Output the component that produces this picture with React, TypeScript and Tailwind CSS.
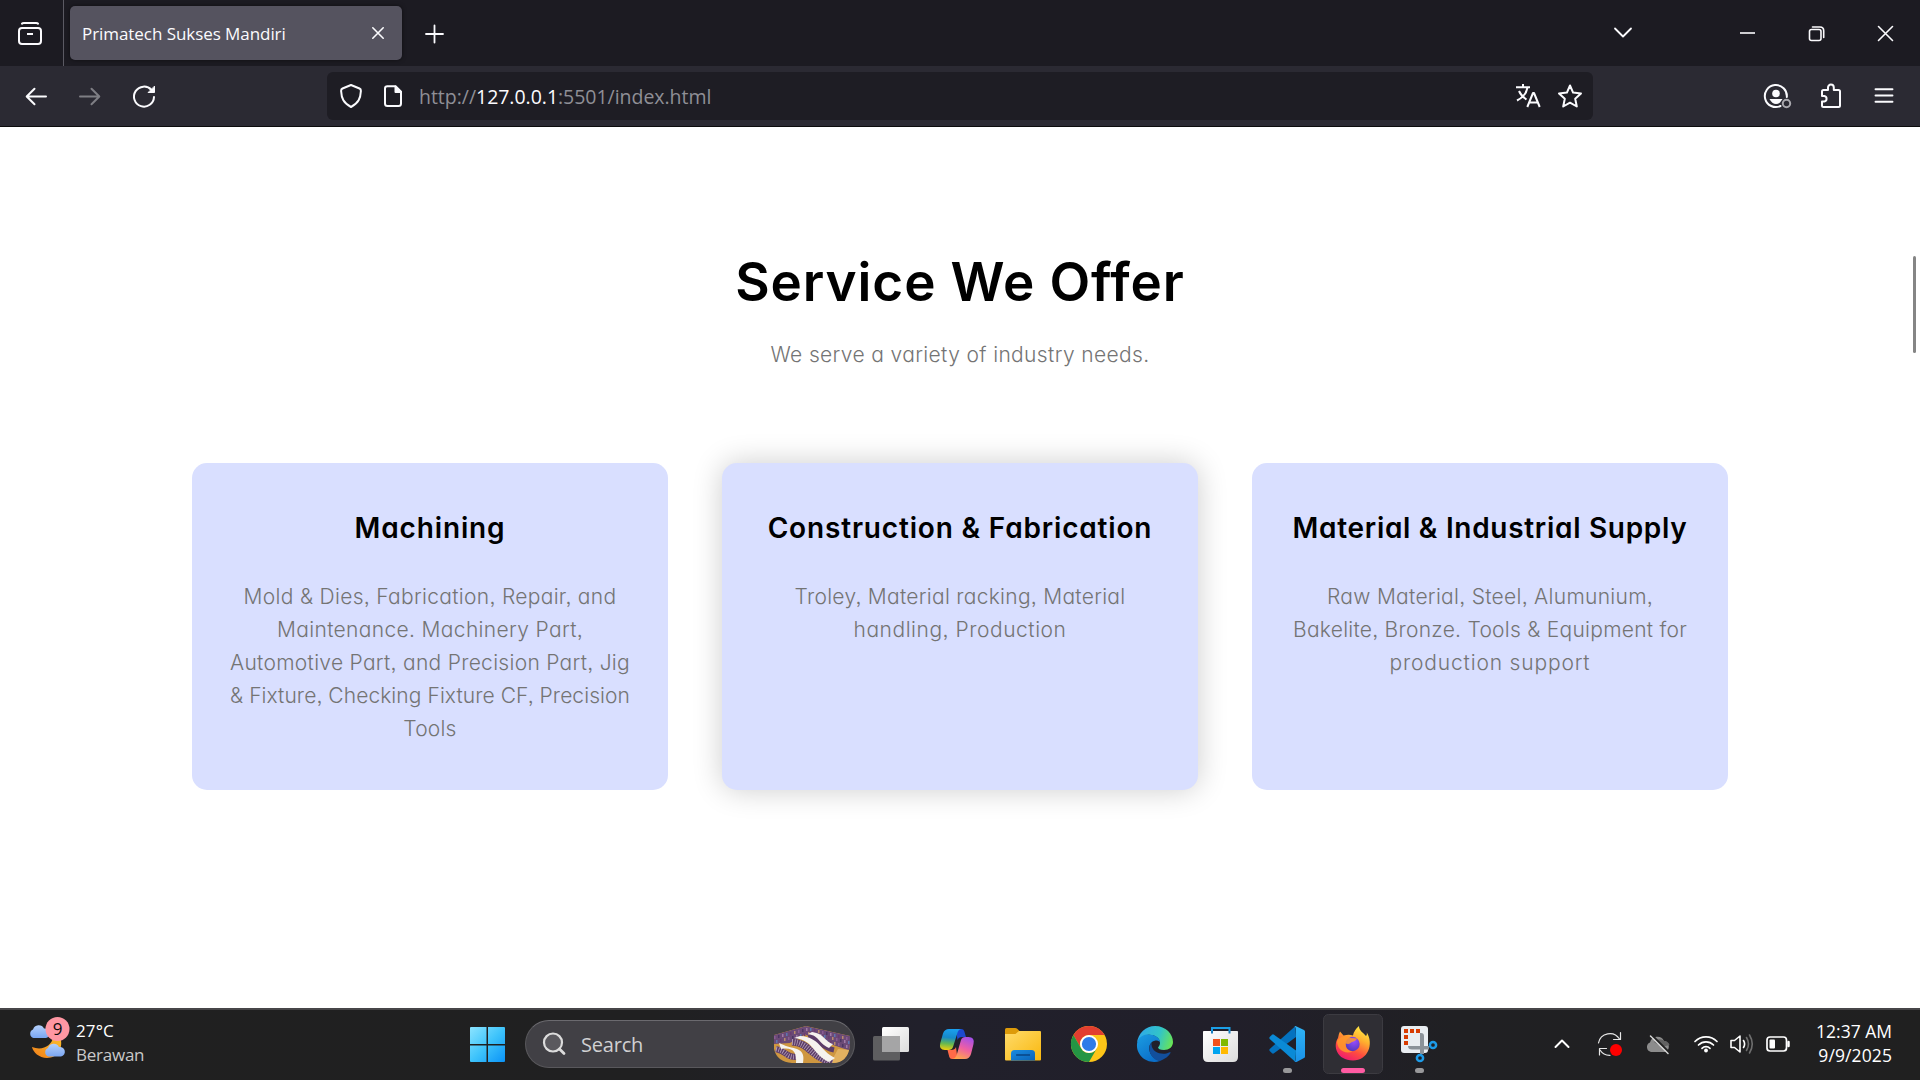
import React from "react";

type BoxProps = {
  x: number;
  y: number;
  w: number;
  h: number;
  label: string;
  children: React.ReactNode;
  className?: string;
};

/* Icon button: the drawing uses screen coordinates through the viewBox. */
function Icon({ x, y, w, h, label, children, className = "" }: BoxProps) {
  return (
    <button aria-label={label} className={"flex shrink-0 items-center justify-center " + className}>
      <svg
        width={w}
        height={h}
        viewBox={`${x} ${y} ${w} ${h}`}
        fill="none"
        stroke="#fbfbfe"
        strokeWidth="2"
        strokeLinecap="round"
        strokeLinejoin="round"
      >
        {children}
      </svg>
    </button>
  );
}

function TabStrip() {
  return (
    <div className="flex h-[66px] items-center bg-[#1c1b22]">
      <Icon x={0} y={0} w={63} h={66} label="Firefox View">
        <path d="M22 23.6Q22.4 23 24 23H36Q37.6 23 38 23.6" />
        <rect x="19" y="28" width="22" height="16" rx="3" />
        <path d="M27 34H33" strokeLinecap="butt" />
      </Icon>
      <div className="h-full w-px bg-[#5b5a63]" />
      <div className="ml-[6px] flex h-[54px] w-[332px] items-center justify-between rounded-[5px] bg-[#55535f] pl-3 shadow-[0_0_4px_rgba(0,0,0,0.5)]">
        <span className="pt-px font-['Open_Sans',sans-serif] text-[17px] tracking-[-0.06px] text-[#fbfbfe]">
          Primatech Sukses Mandiri
        </span>
        <Icon x={358} y={13} w={44} h={40} label="Close tab">
          <path d="M372.800 27.800L383.200 38.200M383.200 27.800L372.800 38.200" strokeWidth="1.600" />
        </Icon>
      </div>
      <Icon x={410} y={8} w={50} h={50} label="New tab" className="ml-[8px]">
        <path d="M426 34H443M434.500 25.500V42.500" strokeWidth="1.800" />
      </Icon>
      <Icon x={1600} y={8} w={48} h={50} label="List all tabs" className="ml-auto">
        <path d="M1615 28.500L1623 36.500L1631 28.500" strokeWidth="1.800" />
      </Icon>
      <Icon x={1713} y={0} w={69} h={66} label="Minimize" className="ml-[65px]">
        <path d="M1740 33H1755" strokeWidth="1.600" strokeLinecap="butt" />
      </Icon>
      <Icon x={1782} y={0} w={69} h={66} label="Restore">
        <rect x="1809.500" y="29.500" width="11.500" height="11" rx="2" strokeWidth="1.600" />
        <path d="M1812.500 27H1820Q1823.700 27 1823.700 30.700V37.500" strokeWidth="1.600" />
      </Icon>
      <Icon x={1851} y={0} w={69} h={66} label="Close">
        <path d="M1878.500 26.500L1892.500 40.500M1892.500 26.500L1878.500 40.500" strokeWidth="1.600" />
      </Icon>
    </div>
  );
}

function NavBar() {
  return (
    <div className="flex h-[61px] items-center border-b border-[#0c0c0d] bg-[#2b2a33] pr-3 pl-3">
      <Icon x={12} y={72} w={48} h={48} label="Back">
        <path d="M27 96.500H46M34.500 88.700L26.700 96.500L34.500 104.300" />
      </Icon>
      <Icon x={66} y={72} w={48} h={48} label="Forward" className="ml-[6px] opacity-40">
        <path d="M80 96.500H99M91.500 88.700L99.300 96.500L91.500 104.300" />
      </Icon>
      <Icon x={120} y={72} w={48} h={48} label="Reload" className="ml-[6px]">
        <path d="M151.500 90A10 10 0 1 0 154 97" />
        <path d="M154.500 86.500V92.500H148.500Z" fill="#fbfbfe" strokeWidth="1" />
      </Icon>
      <div className="ml-[159px] flex h-12 w-[1266px] items-center rounded-[6px] bg-[#1e1d24] pr-[3px] pl-[7px]">
        <Icon x={334} y={78} w={34} h={36} label="Tracking protection">
          <path d="M351 85L359.500 88.500Q361 89.200 360.900 91C360.500 98.500 358.500 103 351 107C343.500 103 341.500 98.500 341.100 91Q341 89.200 342.500 88.500Z" />
        </Icon>
        <Icon x={376} y={78} w={34} h={36} label="Site information" className="ml-2">
          <path d="M387 86.200H395.500L401 91.700V103.500Q401 106 398.500 106H387.500Q385 106 385 103.500V88.500Q385 86.200 387.500 86.200Z" />
          <path d="M395.500 86.500V92H401Z" fill="#fbfbfe" />
        </Icon>
        <span className="ml-[9px] pt-[2px] font-['Open_Sans',sans-serif] text-[19.5px] tracking-[-0.03px] text-[#8f8f96]">
          http://<span className="text-[#fbfbfe]">127.0.0.1</span>:5501/index.html
        </span>
        <Icon x={1508} y={78} w={40} h={36} label="Translate page" className="ml-auto">
          <path d="M1516 87.300H1530M1523 84V87M1527.500 87.500C1526.500 93 1522 98 1517 100.500M1519 91C1520.500 94.500 1523.500 97.500 1526.500 99.500" strokeLinecap="butt" />
          <path d="M1527.300 107L1533 93H1534L1539.700 107M1529.500 102.500H1537.500" strokeLinecap="butt" />
        </Icon>
        <Icon x={1550} y={78} w={40} h={36} label="Bookmark this page" className="ml-[2px]">
          <path d="M1570 85.500L1573.100 92.600L1581 93.500L1575.200 98.700L1576.800 106.500L1570 102.700L1563.200 106.500L1564.800 98.700L1559 93.500L1566.900 92.600Z" />
        </Icon>
      </div>
      <Icon x={1754} y={76} w={46} h={40} label="Account" className="ml-auto">
        <path d="M1780.500 106A11 11 0 1 1 1786.800 97" />
        <circle cx="1776" cy="93.500" r="3.800" fill="#fbfbfe" stroke="none" />
        <path d="M1769.500 99H1782.500L1780 102.500Q1778 104 1776 104Q1772 104 1769.500 99Z" fill="#fbfbfe" stroke="none" />
        <circle cx="1786.500" cy="103.500" r="3.700" stroke="#a9a8ae" />
      </Icon>
      <Icon x={1808} y={76} w={48} h={40} label="Extensions" className="ml-2">
        <path d="M1822 96V91.500Q1822 90 1823.500 90H1828V87.500A2.900 2.900 0 0 1 1833.800 87.500V90H1838.500Q1840 90 1840 91.500V105.500Q1840 107 1838.500 107H1823.500Q1822 107 1822 105.500V101.500H1824.300A2.800 2.800 0 0 0 1824.300 96Z" />
      </Icon>
      <Icon x={1860} y={76} w={48} h={40} label="Menu" className="ml-1">
        <path d="M1875.500 89.200H1892.500M1875.500 95.500H1892.500M1875.500 101.800H1892.500" strokeWidth="1.900" />
      </Icon>
    </div>
  );
}

const FEATURES = "[font-feature-settings:'cv11','ss03','liga'_0]";

type Service = { title: string; titleClass: string; lines: [string, string][]; cardClass: string };

const services: Service[] = [
  {
    title: "Machining",
    titleClass: "tracking-[0.85px]",
    cardClass: "",
    lines: [
      ["Mold & Dies, Fabrication, Repair, and", "tracking-[0.31px]"],
      ["Maintenance. Machinery Part,", "tracking-[0.34px]"],
      ["Automotive Part, and Precision Part, Jig", "tracking-[0.29px]"],
      ["& Fixture, Checking Fixture CF, Precision", "tracking-[0.07px]"],
      ["Tools", "tracking-[0.2px]"],
    ],
  },
  {
    title: "Construction & Fabrication",
    titleClass: "tracking-[0.83px]",
    cardClass: "shadow-[0_0_30px_rgba(0,0,0,0.2)]",
    lines: [
      ["Troley, Material racking, Material", "tracking-[0.28px]"],
      ["handling, Production", "tracking-[0.54px]"],
    ],
  },
  {
    title: "Material & Industrial Supply",
    titleClass: "tracking-[0.7px]",
    cardClass: "",
    lines: [
      ["Raw Material, Steel, Alumunium,", "tracking-[0.29px]"],
      ["Bakelite, Bronze. Tools & Equipment for", "tracking-[0.26px]"],
      ["production support", "tracking-[0.83px]"],
    ],
  },
];

function Page() {
  return (
    <main
      className={
        "relative flex h-[881px] flex-col items-center bg-white pt-[119px] text-center font-['Inter',sans-serif] " + FEATURES
      }
    >
      <h1 className="text-[53px] leading-[72px] font-semibold tracking-[0.9px] text-black">Service We Offer</h1>
      <p className="mt-[20px] text-[21px] leading-[33px] font-light tracking-[0.36px] text-[#747474]">
        We serve a variety of industry needs.
      </p>
      <div className="mt-[92px] grid w-[1536px] grid-cols-3 gap-[54px]">
        {services.map((s) => (
          <article key={s.title} className={"h-[327px] rounded-[15px] bg-[#d9dfff] pt-[45px] " + s.cardClass}>
            <h2 className={"text-[28px] leading-[40px] font-semibold text-black " + s.titleClass}>{s.title}</h2>
            <p className="mt-[32px] text-[21px] leading-[33px] font-light text-[#747474]">
              {s.lines.map(([text, tracking]) => (
                <span key={text} className={"block whitespace-nowrap " + tracking}>
                  {text}
                </span>
              ))}
            </p>
          </article>
        ))}
      </div>
      <div className="absolute top-[129px] right-[4px] h-[97px] w-[3px] rounded-full bg-[#858585]" />
    </main>
  );
}

function AppIcon({ x, label, children }: { x: number; label: string; children: React.ReactNode }) {
  return (
    <button aria-label={label} className="h-[60px] w-[60px] shrink-0">
      <svg width="60" height="60" viewBox={`${x} 1014 60 60`}>
        {children}
      </svg>
    </button>
  );
}

function Gradients() {
  return (
    <svg width="0" height="0" className="absolute">
      <defs>
        <linearGradient id="win" gradientUnits="userSpaceOnUse" x1="470" y1="1027" x2="505" y2="1062">
          <stop offset="0" stopColor="#8ce4ff" />
          <stop offset="0.5" stopColor="#3fc4fb" />
          <stop offset="1" stopColor="#0a93f7" />
        </linearGradient>
        <linearGradient id="cloud" x1="0" y1="0" x2="0" y2="1">
          <stop offset="0" stopColor="#b4d0fb" />
          <stop offset="1" stopColor="#7aa6f2" />
        </linearGradient>
        <linearGradient id="moon" x1="0" y1="1" x2="1" y2="0">
          <stop offset="0" stopColor="#ef7d1a" />
          <stop offset="1" stopColor="#fbc02d" />
        </linearGradient>
        <linearGradient id="white" x1="0" y1="0" x2="1" y2="1">
          <stop offset="0" stopColor="#ffffff" />
          <stop offset="1" stopColor="#dcdcdc" />
        </linearGradient>
        <linearGradient id="copA" x1="0.4" y1="0" x2="0.3" y2="1">
          <stop offset="0" stopColor="#1a9fee" />
          <stop offset="0.4" stopColor="#1689c9" />
          <stop offset="0.7" stopColor="#66b850" />
          <stop offset="1" stopColor="#f2cf0d" />
        </linearGradient>
        <linearGradient id="copB" x1="0.7" y1="0" x2="0.3" y2="1">
          <stop offset="0" stopColor="#a550e8" />
          <stop offset="0.5" stopColor="#ee5fa4" />
          <stop offset="1" stopColor="#ffa64c" />
        </linearGradient>
        <linearGradient id="folder" x1="0" y1="0" x2="1" y2="1">
          <stop offset="0" stopColor="#ffdb6b" />
          <stop offset="1" stopColor="#f9b80e" />
        </linearGradient>
        <linearGradient id="folderBlue" x1="0" y1="0" x2="1" y2="1">
          <stop offset="0" stopColor="#1a8be0" />
          <stop offset="1" stopColor="#0a63b8" />
        </linearGradient>
        <linearGradient id="edgeTop" gradientUnits="userSpaceOnUse" x1="1138" y1="1034" x2="1173" y2="1046">
          <stop offset="0" stopColor="#2fa9e8" />
          <stop offset="0.55" stopColor="#32c4c8" />
          <stop offset="1" stopColor="#6fe84a" />
        </linearGradient>
        <linearGradient id="edgeLeft" x1="0" y1="0" x2="0.6" y2="1">
          <stop offset="0" stopColor="#1b9de2" />
          <stop offset="1" stopColor="#0b6fc9" />
        </linearGradient>
        <linearGradient id="vsc" x1="0" y1="0" x2="0" y2="1">
          <stop offset="0" stopColor="#2fb4f6" />
          <stop offset="1" stopColor="#1a92e8" />
        </linearGradient>
        <linearGradient id="fox" x1="0.8" y1="0" x2="0.3" y2="1">
          <stop offset="0" stopColor="#fff24a" />
          <stop offset="0.35" stopColor="#ffb02e" />
          <stop offset="0.7" stopColor="#ff4c3f" />
          <stop offset="1" stopColor="#ee1a72" />
        </linearGradient>
        <radialGradient id="foxGlobe" cx="0.6" cy="0.3" r="0.8">
          <stop offset="0" stopColor="#9a4dff" />
          <stop offset="1" stopColor="#4a36b5" />
        </radialGradient>
        <clipPath id="pic">
          <path d="M774 1036L806 1027L850 1037V1046Q848 1064 832 1064H792Q777 1063 774 1050Z" />
        </clipPath>
      </defs>
    </svg>
  );
}

const cloudPath = (x: number, y: number) =>
  `M${x + 4.5} ${y + 13}A4.500 4.500 0 0 1 ${x + 4} ${y + 4.5}A6 6 0 0 1 ${x + 15} ${y + 3.5}A4.800 4.800 0 0 1 ${x + 17} ${y + 13}Z`;

const bookRows = [0, 1, 2, 3, 4, 5, 6, 7, 8, 9, 10, 11, 12, 13, 14, 15, 16, 17, 18];
const bookColors = ["#8a5c93", "#4a3562", "#a07aa6", "#5c77b0", "#6a3c70", "#b98b6a"];

function Taskbar() {
  return (
    <footer className="relative flex h-[72px] items-center border-t-2 border-[#474649] bg-[linear-gradient(90deg,#202020_0%,#202021_34%,#21202b_48%,#211f2a_64%,#202023_76%,#202020_100%)] pb-[2px] font-['Open_Sans',sans-serif]">
      <Gradients />
      <div className="flex w-[457px] items-center pl-[24px]">
        <svg width="52" height="60" viewBox="24 1014 52 60">
          <path d="M60 1037C64 1047 58 1058 47 1058C39 1058 33 1052 32 1047C42 1051 52 1046 53 1037Z" fill="url(#moon)" />
          <path d={cloudPath(29, 1025)} fill="url(#cloud)" />
          <path d={cloudPath(44, 1043.5)} fill="url(#cloud)" />
          <circle cx="57.500" cy="1029" r="12" fill="#ff97a3" />
          <text x="57.500" y="1035" textAnchor="middle" fontSize="17" fill="#0b0b0b">
            9
          </text>
        </svg>
        <div className="flex flex-col pb-[2px] text-[17px] leading-[24px]">
          <span className="tracking-[0.1px] text-white">27°C</span>
          <span className="tracking-[-0.24px] text-[#c9c9c9]">Berawan</span>
        </div>
      </div>

      <AppIcon x={457} label="Start">
        <path
          d="M471 1027H486.500V1044H470V1028Q470 1027 471 1027ZM488 1027H504Q505 1027 505 1028V1044H488ZM470 1045.500H486.500V1062H471Q470 1062 470 1061ZM488 1045.500H505V1061Q505 1062 504 1062H488Z"
          fill="url(#win)"
        />
      </AppIcon>

      <div className="ml-[8px] flex h-12 w-[330px] items-center rounded-full border border-[#59585c] border-t-[#6b6a6f] bg-[#414045] pl-[15px]">
        <svg width="28" height="30" viewBox="541 1029 28 30" fill="none">
          <circle cx="553" cy="1042.500" r="9" stroke="#dcdcdc" strokeWidth="2.200" fill="#5a595e" />
          <path d="M559.500 1049L564 1053.500" stroke="#dcdcdc" strokeWidth="2.800" strokeLinecap="round" />
        </svg>
        <span className="ml-[12px] pt-[2px] text-[20px] tracking-[-0.2px] text-[#d0d0d2]">Search</span>
        <svg width="78" height="40" viewBox="773 1025 78 40" className="mr-[3px] ml-auto">
          <g clipPath="url(#pic)">
            <rect x="773" y="1025" width="78" height="40" fill="#cf9740" />
            <path d="M773 1036L806 1027V1035L790 1044L773 1045Z" fill="#6b4a76" />
            <path d="M806 1027L851 1037V1052L836 1047L806 1036Z" fill="#6b4a76" />
            {bookRows.map((i) => (
              <g key={i}>
                <rect x={774 + i * 4} y={i < 9 ? 1037 - i : 1029 + (i - 9)} width="1.500" height="3" fill={bookColors[i % 6]} />
                <rect x={776 + i * 4} y={i < 9 ? 1041 - i : 1033 + (i - 9)} width="1.500" height="3" fill={bookColors[(i + 3) % 6]} />
                {i > 11 && <rect x={774 + i * 4} y={1037 + (i - 9)} width="1.500" height="3" fill={bookColors[(i + 2) % 6]} />}
              </g>
            ))}
            <path d="M838 1050L851 1051V1065H830Z" fill="#e2b160" />
            <path d="M776 1050C789 1053 784 1058 796 1058" stroke="#5c3d68" strokeWidth="6" fill="none" />
            <path d="M776 1050C789 1053 784 1058 796 1058" stroke="#b9a3bd" strokeWidth="5" strokeDasharray="0.8 1.600" fill="none" />
            <path d="M792 1043C810 1044 808 1056 832 1064" stroke="#5c3d68" strokeWidth="7" fill="none" />
            <path d="M792 1043C810 1044 808 1056 832 1064" stroke="#b9a3bd" strokeWidth="6" strokeDasharray="0.8 1.600" fill="none" />
            <path d="M808 1038C820 1040 820 1048 834 1051" stroke="#5c3d68" strokeWidth="5" fill="none" />
            <path d="M779 1044L781 1050C793 1048 797 1053 796 1064H803C806 1049 795 1050 786 1047Z" fill="#f5f3ee" />
            <path d="M794 1039L800 1037C820 1038 820 1052 835 1059L829 1063C812 1055 814 1041 794 1039Z" fill="#f5f3ee" />
            <path d="M808 1035L812 1033C825 1035 824 1042 833 1045L829 1049C818 1044 820 1037 808 1035Z" fill="#f5f3ee" />
          </g>
        </svg>
      </div>

      <div className="ml-[6px] flex gap-[6px]">
        <AppIcon x={861} label="Task view">
          <rect x="882" y="1027" width="27" height="25" rx="1.500" fill="url(#white)" />
          <rect x="873" y="1036" width="27" height="24.500" rx="1.500" fill="#5e5e60" />
          <path d="M882 1036H900V1052H882Z" fill="#a5a5a6" />
        </AppIcon>
        <AppIcon x={927} label="Copilot">
          <path d="M956 1029H961.500Q963.500 1029 964.200 1031L966 1037H962Q958.500 1037 957.500 1040Z" fill="#1c49cf" />
          <path d="M957.500 1059H952Q950 1059 949.300 1057L947.500 1050H951Q955 1050 956 1047Z" fill="#ff6a48" />
          <path d="M949 1029H961Q958.500 1029.500 957.700 1032L953 1047Q952 1050 948.500 1050H945Q938.500 1050 940.300 1043L943 1033.500Q944.500 1029 949 1029Z" fill="url(#copA)" />
          <path d="M965 1059H952.500Q955.500 1058.500 956.500 1055.500L961 1040Q962 1037 965.500 1037H968.500Q975 1037 973.500 1044L971 1054Q969.500 1059 965 1059Z" fill="url(#copB)" />
        </AppIcon>
        <AppIcon x={993} label="File Explorer">
          <path d="M1005 1029.500Q1005 1028 1006.500 1028H1015Q1016.500 1028 1017.500 1029L1020 1031.500V1036H1005Z" fill="#dd9b0a" />
          <path d="M1005 1034H1015.500L1019 1031H1040Q1041 1031 1041 1032V1059.500Q1041 1060.500 1040 1060.500H1006Q1005 1060.500 1005 1059.500Z" fill="url(#folder)" />
          <path d="M1011 1060.500V1053.500Q1011 1050 1014.500 1050H1031.500Q1035 1050 1035 1053.500V1060.500Z" fill="url(#folderBlue)" />
          <path d="M1016 1055H1030" stroke="#0a4a8c" strokeWidth="1.700" />
        </AppIcon>
        <AppIcon x={1059} label="Google Chrome">
          <circle cx="1089" cy="1044" r="18" fill="#fdc518" />
          <path d="M1073.410 1035A18 18 0 0 1 1104.590 1035H1089A9 9 0 0 0 1081.200 1048.500Z" fill="#e23e30" />
          <path d="M1073.410 1035L1081.200 1048.500A9 9 0 0 0 1096.800 1048.500L1089 1062A18 18 0 0 1 1073.410 1035Z" fill="#249544" />
          <circle cx="1089" cy="1044" r="9" fill="#fff" />
          <circle cx="1089" cy="1044" r="7.100" fill="#2f7be8" />
        </AppIcon>
        <AppIcon x={1125} label="Microsoft Edge">
          <path d="M1137 1043C1138 1033 1146 1026 1155 1026C1166 1026 1173 1034 1173 1042C1173 1047 1169 1050 1164 1050C1160 1050 1158 1048.500 1158 1047.500C1159 1046 1160 1045 1160 1043C1160 1037 1153 1034 1147 1035C1142 1036 1139 1039 1137 1043Z" fill="url(#edgeTop)" />
          <path d="M1137 1044C1138 1037 1143 1034.500 1148 1034.500C1155 1034.500 1160 1038 1160 1042C1158 1040 1154.500 1040 1152 1042C1146 1047 1150 1058 1160 1061C1148 1065 1136 1056 1137 1044Z" fill="url(#edgeLeft)" />
          <path d="M1152 1042C1146 1048 1151 1060 1160 1061C1165 1059 1169 1056 1170.500 1053C1171 1052 1170 1052 1169 1052.500C1163 1055.500 1152 1053 1151.500 1044.500C1151.500 1043.500 1151.500 1042.500 1152 1042Z" fill="#124f9c" />
        </AppIcon>
        <AppIcon x={1191} label="Microsoft Store">
          <path d="M1212 1033V1028H1229.500V1033" fill="none" stroke="#1b9fe6" strokeWidth="2" />
          <path d="M1203 1031.500Q1203 1031 1204 1031H1237Q1238 1031 1238 1031.500V1057Q1238 1062 1233 1062H1208Q1203 1062 1203 1057Z" fill="url(#white)" />
          <path d="M1212 1031V1033.500M1229.500 1031V1033.500" stroke="#1b7fc0" strokeWidth="2" />
          <path d="M1213 1039H1220V1046H1213Z" fill="#f1511b" />
          <path d="M1221 1039H1228V1046H1221Z" fill="#80b900" />
          <path d="M1213 1047H1220V1054H1213Z" fill="#00a4ef" />
          <path d="M1221 1047H1228V1054H1221Z" fill="#ffb900" />
        </AppIcon>
        <AppIcon x={1257} label="Visual Studio Code">
          <path d="M1295.500 1026L1296 1037L1274 1053.300Q1273 1054 1272 1053.300L1269.700 1051Q1269 1050 1269.700 1049Z" fill="#0472bf" />
          <path d="M1295.500 1062L1296 1050.500L1274 1034.700Q1273 1034 1272 1034.700L1269.700 1037Q1269 1038 1269.700 1039Z" fill="#0a8ad6" />
          <path d="M1295.500 1026L1304 1030Q1305 1030.500 1305 1031.500V1056.500Q1305 1057.500 1304 1058L1297 1061.700Q1295.500 1062.300 1294.500 1061.500Q1296 1061 1296 1059V1029Q1296 1027 1294.500 1026.500Z" fill="url(#vsc)" />
          <rect x="1283" y="1068" width="9" height="5" rx="2.500" fill="#98989a" />
        </AppIcon>
        <AppIcon x={1323} label="Firefox">
          <rect x="1323.500" y="1014.500" width="59" height="59" rx="5" fill="#2f2e34" stroke="#3c3b41" />
          <path d="M1340 1031.500L1343.500 1035.500Q1349 1034 1353 1035.500Q1354 1030 1359 1026C1359 1031 1363 1032 1366 1036C1367 1035 1367 1034 1366.800 1032.500C1374 1044 1368 1060.500 1353 1060.500C1337 1060.500 1332.500 1046 1338 1038Q1338.500 1034 1340 1031.500Z" fill="url(#fox)" />
          <circle cx="1352.500" cy="1044" r="7.200" fill="url(#foxGlobe)" />
          <path d="M1337 1041C1340 1036 1346 1035 1351 1038L1357 1038.500C1356 1041.500 1352 1041.500 1350.500 1043C1349 1044.500 1347 1044 1345.800 1043.500C1345.500 1048 1348 1051 1353 1051.500C1344 1055 1337 1049 1337 1041Z" fill="#ff9a2a" fillOpacity="0.85" />
          <rect x="1341" y="1068" width="24" height="5" rx="2.500" fill="#ff5ba3" />
        </AppIcon>
        <AppIcon x={1389} label="Snipping Tool">
          <rect x="1401" y="1026" width="27" height="27" rx="3" fill="#e9edf1" />
          <path
            d="M1404 1029H1408V1033H1404ZM1410 1029H1414V1033H1410ZM1416 1029H1420V1033H1416ZM1404 1035H1408V1039H1404ZM1404 1041H1408V1045H1404Z"
            fill="#d83b01"
          />
          <path d="M1420 1033H1421Q1424 1033 1424 1036V1054H1420ZM1408 1046H1429V1049.500H1412Q1408 1049.500 1408 1046Z" fill="#8b9299" />
          <circle cx="1433" cy="1045" r="3.100" fill="none" stroke="#1d9be8" strokeWidth="2.500" />
          <circle cx="1420" cy="1058" r="3.100" fill="none" stroke="#1d9be8" strokeWidth="2.500" />
          <rect x="1415" y="1068" width="9" height="5" rx="2.500" fill="#98989a" />
        </AppIcon>
      </div>

      <div className="ml-auto flex items-center pr-[28px]">
        <Icon x={1544} y={1024} w={36} h={40} label="Show hidden icons">
          <path d="M1555.500 1047L1562 1040.500L1568.500 1047" stroke="#fff" />
        </Icon>
        <Icon x={1590} y={1024} w={40} h={40} label="Update" className="ml-[10px]">
          <path d="M1598.500 1043A11.500 11.500 0 0 1 1619.500 1039M1620.500 1032.500V1039.500H1613.500M1610 1055.300A11.500 11.500 0 0 1 1600 1050M1599.500 1055V1048.500H1606.500" stroke="#e6e6e6" strokeWidth="1.200" />
          <circle cx="1616" cy="1050" r="6" fill="#fe0000" stroke="none" />
        </Icon>
        <Icon x={1640} y={1024} w={36} h={40} label="OneDrive" className="ml-[10px]">
          <path d="M1651 1052A5 5 0 0 1 1650 1042.500A7.500 7.500 0 0 1 1664 1041A5.700 5.700 0 0 1 1665 1052Z" fill="#8c8c8c" stroke="none" />
          <path d="M1654 1042A7.500 7.500 0 0 1 1664.500 1041A5.700 5.700 0 0 1 1669.500 1045L1662 1047Z" fill="#626262" stroke="none" />
          <path d="M1651.500 1034.800L1669 1052.300" stroke="#202020" strokeWidth="2" />
          <path d="M1650.500 1036L1668 1053.500" stroke="#d8d8d8" strokeWidth="1.500" />
        </Icon>
        <Icon x={1690} y={1024} w={32} h={40} label="Network" className="ml-[14px]">
          <path d="M1695 1041.500A15.500 15.500 0 0 1 1717 1041.500M1698.500 1045A10.600 10.600 0 0 1 1713.500 1045M1702 1048.300A5.800 5.800 0 0 1 1710 1048.300" stroke="#fff" strokeWidth="1.700" />
          <circle cx="1706" cy="1050.500" r="1.900" fill="#fff" stroke="none" />
        </Icon>
        <Icon x={1726} y={1024} w={32} h={40} label="Volume" className="ml-[4px]">
          <path d="M1731 1040.500H1734.500L1740 1036V1052L1734.500 1047.500H1731Z" stroke="#fff" strokeWidth="1.600" />
          <path d="M1743.500 1040.500Q1745.700 1044 1743.500 1047.500" stroke="#fff" strokeWidth="1.600" />
          <path d="M1746.500 1037.500Q1750.500 1044 1746.500 1050.500M1749.500 1035Q1755 1044 1749.500 1053" stroke="#6e6e6e" strokeWidth="1.600" />
        </Icon>
        <Icon x={1762} y={1024} w={32} h={40} label="Battery" className="ml-[4px]">
          <rect x="1767" y="1037" width="19.500" height="14" rx="3" stroke="#fff" strokeWidth="1.700" />
          <path d="M1788.500 1042V1046" stroke="#fff" strokeWidth="2.500" />
          <rect x="1769.500" y="1039.500" width="5.500" height="9" rx="1" fill="#fff" stroke="none" />
        </Icon>
        <div className="flex w-[98px] flex-col pb-[2px] text-right text-[17.500px] leading-[24px] text-white">
          <span>12:37 AM</span>
          <span className="tracking-[0.1px]">9/9/2025</span>
        </div>
      </div>
    </footer>
  );
}

export default function App() {
  return (
    <div className="flex h-[1080px] w-[1920px] flex-col overflow-hidden bg-white">
      <TabStrip />
      <NavBar />
      <Page />
      <Taskbar />
    </div>
  );
}
